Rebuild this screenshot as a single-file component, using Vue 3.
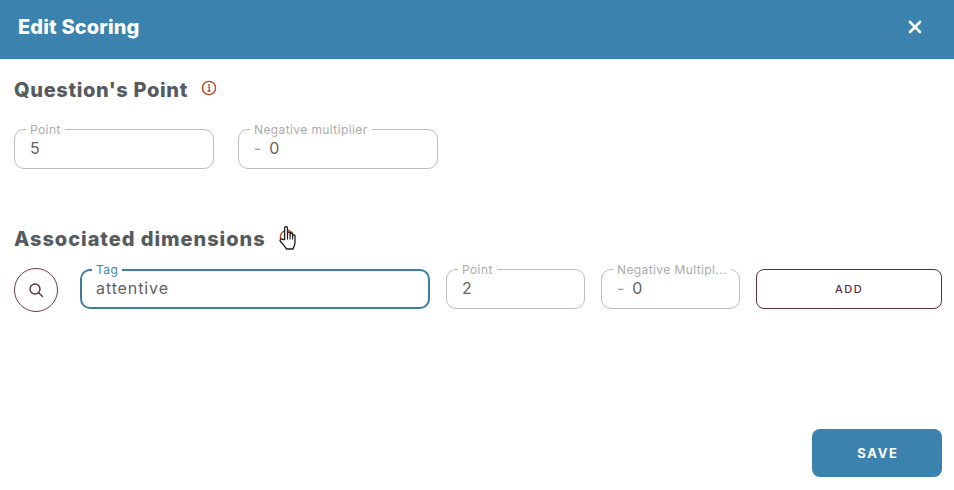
<script setup>
const topFields = [
  { label: 'Point', value: '5', cls: 'w200' },
  { label: 'Negative multiplier', value: '0', minus: true, cls: 'w200' },
]
</script>

<template>
  <div class="dialog">
    <header class="bar">
      <h1>Edit Scoring</h1>
      <svg class="close" viewBox="0 0 14 14" width="14" height="14">
        <path d="M2 2l10 10M12 2L2 12" stroke="#fff" stroke-width="2.6" stroke-linecap="round" />
      </svg>
    </header>

    <main class="body">
      <div class="head first">
        <h2>Question's Point</h2>
        <svg class="info" viewBox="0 0 16 16" width="16" height="16">
          <circle cx="8" cy="8" r="6.6" fill="none" stroke="#b9471f" stroke-width="1.4" />
          <path d="M6.7 7.2H8.3V11M6.6 11H9.6" fill="none" stroke="#b9471f" stroke-width="1.3" />
          <circle cx="8" cy="5" r="0.95" fill="#b9471f" />
        </svg>
      </div>

      <div class="row top">
        <div v-for="f in topFields" :key="f.label" class="field" :class="f.cls">
          <span class="lbl">{{ f.label }}</span>
          <span v-if="f.minus" class="minus">-</span>
          <span class="val">{{ f.value }}</span>
        </div>
      </div>

      <div class="head second">
        <h2>Associated dimensions</h2>
        <span class="cursor-wrap">
          <svg class="info" viewBox="0 0 16 16" width="16" height="16">
            <circle cx="8" cy="8" r="6.6" fill="none" stroke="#b9471f" stroke-width="1.4" />
          </svg>
          <svg class="hand" viewBox="0 0 18 25" width="18" height="25">
            <path d="M5.6 14.5V3.2c0-2.2 2.9-2.2 2.9 0V10V8.4c0-1.7 2.6-1.7 2.6 0V10.4 9.2c0-1.6 2.5-1.6 2.5 0v1.6c0-1.3 2.4-1.3 2.4.2v6.2c0 2.5-.5 3.6-1.4 5.2-.4.8-.5 1.2-.6 1.6H7.400c-.4-1.300-1-2-2.300-3.300L1.500 16.500c-1.300-1.500.4-3.400 2-2.200z" fill="#fff" stroke="#1c1c1c" stroke-width="1.300" stroke-linejoin="round" />
            <path d="M8.500 10v4.500M11.100 10.400v4.100M13.600 10.800v3.700" stroke="#1c1c1c" stroke-width="1.100" fill="none" />
          </svg>
        </span>
      </div>

      <div class="row dims">
        <button class="search" type="button" aria-label="Search">
          <svg viewBox="0 0 16 16" width="16" height="16">
            <circle cx="7" cy="7" r="5" fill="none" stroke="#5e2f42" stroke-width="1.400" />
            <path d="M10.700 10.700L14.500 14.500" stroke="#5e2f42" stroke-width="1.400" stroke-linecap="round" />
          </svg>
        </button>
        <div class="field tag">
          <span class="lbl">Tag</span>
          <span class="val">attentive</span>
        </div>
        <div class="field small">
          <span class="lbl">Point</span>
          <span class="val">2</span>
        </div>
        <div class="field small">
          <span class="lbl">Negative Multipl...</span>
          <span class="minus">-</span>
          <span class="val">0</span>
        </div>
        <button class="add" type="button">ADD</button>
      </div>

      <div class="footer">
        <button class="save" type="button">SAVE</button>
      </div>
    </main>
  </div>
</template>

<style>
html, body { margin: 0; background: #fff; }
</style>

<style scoped>
.dialog {
  width: 954px;
  height: 490px;
  background: #fff;
  font-family: Inter, "Open Sans", sans-serif;
  color: #50565a;
  overflow: hidden;
}
.bar {
  height: 59px;
  box-sizing: border-box;
  background: #3c82ae;
  padding: 0 32px 5px 18px;
  display: flex;
  align-items: center;
  justify-content: space-between;
}
.bar h1 {
  margin: 0;
  font-size: 20px;
  font-weight: 800;
  color: #fff;
  letter-spacing: 0.15px;
}
.body { padding: 0 12px 0 14px; }
.head { display: flex; align-items: center; height: 30px; }
.head.first { margin-top: 15px; }
.head.second { margin-top: 54px; }
h2 {
  margin: 0;
  padding-top: 1px;
  font-size: 20px;
  font-weight: 800;
  color: #555b5f;
  letter-spacing: 0.95px;
}
.first h2 { letter-spacing: 0.65px; }
.info { margin-left: 13px; margin-top: -3px; flex: none; }
.row { display: flex; }
.top { gap: 24px; margin-top: 25px; }
.dims { gap: 16px; margin-top: 16px; align-items: flex-start; }
.field {
  position: relative;
  box-sizing: border-box;
  height: 40px;
  border: 1px solid #bdbdbd;
  border-radius: 10px;
  display: flex;
  align-items: center;
  padding: 0 15px 2px;
  font-size: 16px;
  color: #626262;
}
.w200 { width: 200px; }
.lbl {
  position: absolute;
  top: -7px;
  left: 11px;
  padding: 0 4px;
  background: #fff;
  font-size: 12px;
  line-height: 13px;
  color: #ababab;
  white-space: nowrap;
  letter-spacing: 0.4px;
}
.minus { color: #a0a0a0; margin-right: 8px; }
.val { letter-spacing: 0.9px; }
.cursor-wrap { position: relative; display: inline-flex; }
.hand { position: absolute; left: 13px; top: -7px; }
.search {
  width: 44px;
  height: 44px;
  margin-top: -1px;
  margin-right: 6px;
  padding: 0;
  border: 1px solid #6e3a4e;
  border-radius: 50%;
  background: #fff;
  display: flex;
  align-items: center;
  justify-content: center;
}
.tag {
  width: 350px;
  border: 2px solid #3c7f9f;
  padding: 0 14px 2px;
}
.tag .lbl { color: #3c82ae; top: -8px; left: 10px; }
.small { width: 139px; }
.add {
  width: 186px;
  height: 40px;
  box-sizing: border-box;
  border: 1px solid #5e2f42;
  border-radius: 8px;
  background: #fff;
  color: #5e2f42;
  font: 500 11px Inter, sans-serif;
  letter-spacing: 1.5px;
}
.footer { display: flex; justify-content: flex-end; margin-top: 117px; }
.save {
  width: 130px;
  height: 48px;
  border: 0;
  border-radius: 8px;
  background: #3c82ae;
  color: #fff;
  font: 700 13px Inter, sans-serif;
  letter-spacing: 1.7px;
  padding-left: 8px;
}
</style>
